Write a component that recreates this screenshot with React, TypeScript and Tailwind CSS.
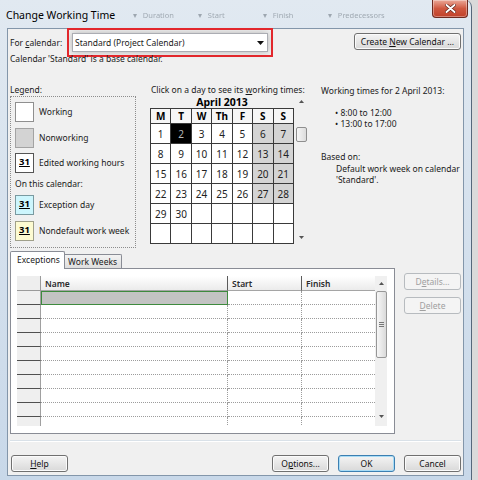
import React from "react";

const font = "font-['Noto_Sans',sans-serif]";

type BtnProps = {
  children: React.ReactNode;
  w?: string;
  disabled?: boolean;
  focused?: boolean;
};

function WinButton({ children, w = "w-[57px]", disabled = false, focused = false }: BtnProps) {
  const look = disabled
    ? "border-[#b7bbbf] bg-[#f4f4f4] text-[#a0a0a0]"
    : focused
    ? "border-[#3c7fb1] bg-linear-to-b from-[#f4f4f4] to-[#d9d9d9] shadow-[inset_0_0_0_1px_#a8dcf6] text-[#111]"
    : "border-[#707070] bg-linear-to-b from-[#f4f4f4] to-[#d9d9d9] shadow-[inset_0_0_0_1px_#fbfbfb] text-[#111]";
  return (
    <div className={`${w} h-[17px] shrink-0 flex items-center justify-center rounded-[3px] border text-[8.5px] leading-[12px] ${look}`}>
      {children}
    </div>
  );
}

function Arrow({ up, className = "" }: { up?: boolean; className?: string }) {
  return (
    <svg width="5" height="3" viewBox="0 0 5 3" className={className}>
      {up ? <path d="M0 3 L2.5 0 L5 3 Z" fill="#555" /> : <path d="M0 0 L2.5 3 L5 0 Z" fill="#555" />}
    </svg>
  );
}

// Legend swatch with optional "31"
function Swatch({ bg, label, border = "border-[#8f8f8f]" }: { bg: string; label?: boolean; border?: string }) {
  return (
    <div className={`w-[19px] h-[20px] shrink-0 border ${border} ${bg} flex items-start pl-[3px] pt-[2px]`}>
      {label && <span className="text-[9.5px] leading-[12px] font-bold underline text-black">31</span>}
    </div>
  );
}

const weeks: (number | null)[][] = [
  [1, 2, 3, 4, 5, 6, 7],
  [8, 9, 10, 11, 12, 13, 14],
  [15, 16, 17, 18, 19, 20, 21],
  [22, 23, 24, 25, 26, 27, 28],
  [29, 30, null, null, null, null, null],
  [null, null, null, null, null, null, null],
];

const dayHeads = ["M", "T", "W", "Th", "F", "S", "S"];

export default function App() {
  const rows = Array.from({ length: 10 }, (_, i) => i);

  return (
    <div className={`w-[478px] h-[480px] bg-[#dadada] overflow-hidden flex ${font}`}>
      <div className="w-[472px] h-[480px] shrink-0 flex flex-col bg-linear-to-b from-[#e1e9f1] to-[#c8d8e9] border-r border-[#55687b] rounded-tr-[7px]">
        {/* Title bar */}
        <div className="h-[28px] shrink-0 flex items-start">
          <div className="w-[133px] pl-[6px] pt-[8px] text-[10.5px] leading-[14px] text-black">Change Working Time</div>
          <div className="flex pt-[10px] text-[7.5px] leading-[10px] text-[#3b4650] opacity-40 blur-[0.6px]">
            <div className="w-[65px]">▾ &nbsp;&nbsp;Duration</div>
            <div className="w-[65px]">▾ &nbsp;&nbsp;Start</div>
            <div className="w-[65px]">▾ &nbsp;&nbsp;Finish</div>
            <div className="w-[90px]">▾ &nbsp;&nbsp;Predecessors</div>
          </div>
          <div className="ml-auto mr-[3px] w-[36px] h-[18px] rounded-b-[4px] border border-t-0 border-[#6e2a20] bg-linear-to-b from-[#eaa898] via-[#cf5840] to-[#c0412a] shadow-[inset_0_0_0_1px_rgba(255,255,255,0.35)] flex items-center justify-center">
            <svg width="11" height="9" viewBox="0 0 11 9">
              <path d="M1.5 1 L9.5 8 M9.5 1 L1.5 8" stroke="#5a1d14" strokeWidth="3.2" strokeLinecap="round" />
              <path d="M1.5 1 L9.5 8 M9.5 1 L1.5 8" stroke="#ffffff" strokeWidth="1.9" strokeLinecap="round" />
            </svg>
          </div>
        </div>

        {/* Client area */}
        <div className="ml-[7px] w-[457px] h-[448px] shrink-0 bg-[#f0f0f0] border border-[#8396aa] px-[2px] flex flex-col text-[8.5px] leading-[12px] text-[#1a1a1a]">
          {/* For calendar row */}
          <div className="mt-[4px] flex items-start">
            <div className="w-[62px] h-[19px] flex items-center">
              For&nbsp;<span className="underline">c</span>alendar:
            </div>
            <div className="w-[196px] h-[19px] bg-white border border-[#abadb3] flex items-center pl-[2px] outline-2 outline-[#e2272c] outline-offset-[3px] shadow-[0_0_6px_rgba(0,0,0,0.25)]">
              <span>Standard (Project Calendar)</span>
              <svg width="7" height="4" viewBox="0 0 7 4" className="ml-auto mr-[3px]">
                <path d="M0 0 L3.5 4 L7 0 Z" fill="#111" />
              </svg>
            </div>
            <div className="ml-auto">
              <WinButton w="w-[107px]">
                Create&nbsp;<span className="underline">N</span>ew Calendar ...
              </WinButton>
            </div>
          </div>
          <div className="mt-px h-[12px]">Calendar 'Standard' is a base calendar.</div>

          {/* Middle section */}
          <div className="mt-[19px] flex items-start">
            {/* Legend */}
            <div className="w-[126px] shrink-0 flex flex-col">
              <div className="h-[12px]">Legend:</div>
              <div className="h-[152px] border border-dotted border-[#8c8c8c] pl-[4px] pt-[5px] flex flex-col">
                <div className="flex items-center">
                  <Swatch bg="bg-white" />
                  <span className="ml-[5px]">Working</span>
                </div>
                <div className="mt-[6px] flex items-center">
                  <Swatch bg="bg-[#d3d3d3]" border="border-[#a3a3a3]" />
                  <span className="ml-[5px]">Nonworking</span>
                </div>
                <div className="mt-[5px] flex items-center">
                  <Swatch bg="bg-white" label border="border-[#555]" />
                  <span className="ml-[5px]">Edited working hours</span>
                </div>
                <div className="mt-[5px] h-[12px]">On this calendar:</div>
                <div className="mt-[5px] flex items-center">
                  <Swatch bg="bg-[#cdf6fd]" label border="border-[#7a9aa0]" />
                  <span className="ml-[5px]">Exception day</span>
                </div>
                <div className="mt-[6px] flex items-center">
                  <Swatch bg="bg-[#fdfbd2]" label border="border-[#a0a08a]" />
                  <span className="ml-[5px] whitespace-nowrap">Nondefault work week</span>
                </div>
              </div>
            </div>

            {/* Calendar */}
            <div className="ml-[14px] w-[157px] shrink-0 flex flex-col">
              <div className="h-[12px] pl-px whitespace-nowrap">
                Click on a day to see its <span className="underline">w</span>orking times:
              </div>
              <div className="flex items-start">
                <div className="w-[144px] flex flex-col">
                  <div className="h-[12px] text-center font-bold text-[10.5px] leading-[12px] text-black">April 2013</div>
                  <div className="grid grid-cols-7 gap-px p-px bg-[#3a3a3a]">
                    {dayHeads.map((d, i) => (
                      <div key={i} className="h-[14px] bg-[#f6f6f6] flex items-center justify-center font-bold text-[10px] text-black">
                        {d}
                      </div>
                    ))}
                    {weeks.flatMap((wk, r) =>
                      wk.map((day, c) => {
                        const sel = day === 2;
                        const weekend = day !== null && c >= 5;
                        const bg = sel ? "bg-black text-[#b8b8b8]" : weekend ? "bg-[#d4d4d4] text-[#222]" : "bg-white text-[#222]";
                        return (
                          <div key={`${r}-${c}`} className={`h-[19px] flex items-center justify-center text-[10px] ${bg}`}>
                            {day ?? ""}
                          </div>
                        );
                      })
                    )}
                  </div>
                </div>
                <div className="ml-px w-[12px] h-[148px] flex flex-col items-center">
                  <div className="h-[10px] flex items-center">
                    <Arrow up />
                  </div>
                  <div className="mt-[21px] w-[11px] h-[15px] rounded-[2px] border border-[#8e8e8e] bg-linear-to-r from-[#f6f6f6] to-[#dcdcdc]" />
                  <div className="mt-auto mb-[5px]">
                    <Arrow />
                  </div>
                </div>
              </div>
            </div>

            {/* Working times */}
            <div className="ml-[14px] w-[140px] flex flex-col leading-[11px] whitespace-nowrap">
              <div className="h-[11px] mt-px">Working times for 2 April 2013:</div>
              <div className="mt-[11px] pl-[14px]">• 8:00 to 12:00</div>
              <div className="pl-[14px]">• 13:00 to 17:00</div>
              <div className="mt-[22px]">Based on:</div>
              <div className="pl-[15px] mt-px">Default work week on calendar</div>
              <div className="pl-[15px]">'Standard'.</div>
            </div>
          </div>

          {/* Exceptions / Work weeks */}
          <div className="mt-[3px] flex items-start">
            <div className="w-[385px] shrink-0 flex flex-col">
              <div className="h-[17px] flex items-end">
                <div className="w-[55px] h-[18px] -mb-px relative z-10 border border-b-0 border-[#898c95] bg-white rounded-t-[2px] pl-[6px] pt-[2px]">
                  Exceptions
                </div>
                <div className="w-[57px] h-[14px] border border-l-0 border-b-0 border-[#898c95] bg-linear-to-b from-[#f3f3f3] to-[#dedede] rounded-tr-[2px] pl-[3px] leading-[13px]">
                  Work Weeks
                </div>
              </div>
              <div className="h-[166px] border border-[#898c95] bg-white pl-[6px] pt-[7px]">
                <div className="w-[370px] h-[150px] flex overflow-hidden">
                  <div className="w-[358px] flex flex-col">
                    <div className="h-[15px] shrink-0 flex font-semibold text-[#2a2a2a]">
                      <div className="w-[24px] bg-[#eeeeee] border-r border-b border-[#9a9a9a]" />
                      <div className="w-[187px] pl-[4px] border-r border-r-[#5a5a5a] border-b border-b-[#a5a5a5] bg-linear-to-b from-white to-[#ebebeb] leading-[15px]">
                        Name
                      </div>
                      <div className="w-[74px] pl-[4px] border-r border-r-[#5a5a5a] border-b border-b-[#a5a5a5] bg-linear-to-b from-white to-[#ebebeb] leading-[15px]">
                        Start
                      </div>
                      <div className="w-[73px] pl-[4px] border-b border-b-[#a5a5a5] bg-linear-to-b from-white to-[#ebebeb] leading-[15px]">
                        Finish
                      </div>
                    </div>
                    {rows.map((r) => (
                      <div key={r} className="h-[14px] shrink-0 flex">
                        <div className="w-[24px] bg-[#efefef] border-b border-b-[#505050] border-r border-r-[#a0a0a0]" />
                        {r === 0 ? (
                          <div className="w-[187px] bg-[#c3c3c3] border border-[#3e8a3e]" />
                        ) : (
                          <div className="w-[187px] border-b border-r border-dotted border-[#9c9c9c]" />
                        )}
                        <div className="w-[74px] border-b border-r border-dotted border-[#9c9c9c]" />
                        <div className="w-[73px] border-b border-dotted border-[#9c9c9c]" />
                      </div>
                    ))}
                  </div>
                  <div className="w-[12px] flex flex-col items-center bg-[#f0f0f0]">
                    <div className="h-[15px] flex items-center">
                      <Arrow up />
                    </div>
                    <div className="w-[11px] h-[67px] rounded-[2px] border border-[#979797] bg-linear-to-r from-[#f7f7f7] to-[#dadada] flex flex-col items-center justify-center gap-px">
                      <div className="w-[5px] h-px bg-[#777]" />
                      <div className="w-[5px] h-px bg-[#777]" />
                      <div className="w-[5px] h-px bg-[#777]" />
                    </div>
                    <div className="mt-auto mb-[8px]">
                      <Arrow />
                    </div>
                  </div>
                </div>
              </div>
            </div>
            <div className="ml-[9px] pt-[22px] flex flex-col gap-[7px]">
              <WinButton disabled>
                D<span className="underline">e</span>tails...
              </WinButton>
              <WinButton disabled>
                <span className="underline">D</span>elete
              </WinButton>
            </div>
          </div>

          {/* Separator */}
          <div className="mt-[6px] h-[2px] border-t border-[#d9e1e8] border-b border-b-white" />

          {/* Bottom buttons */}
          <div className="mt-[13px] flex items-center">
            <div className="ml-px">
              <WinButton>
                <span className="underline">H</span>elp
              </WinButton>
            </div>
            <div className="ml-auto flex gap-[9px]">
              <WinButton>
                O<span className="underline">p</span>tions...
              </WinButton>
              <WinButton focused>OK</WinButton>
              <WinButton>Cancel</WinButton>
            </div>
          </div>
        </div>
      </div>
    </div>
  );
}
